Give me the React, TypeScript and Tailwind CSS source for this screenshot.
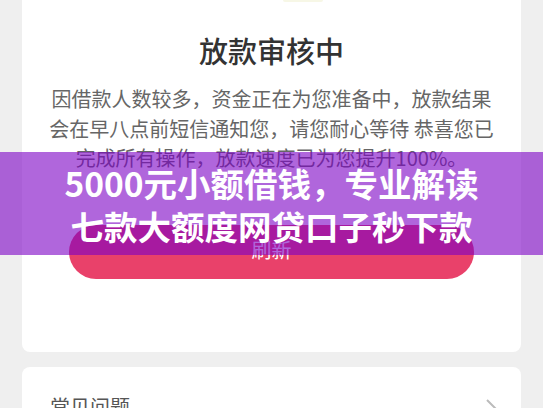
export default function App() {
  const font = { fontFamily: '"Noto Sans CJK SC", "Noto Sans", sans-serif' };
  return (
    <div
      style={font}
      className="relative w-[543px] h-[408px] overflow-hidden bg-[#efefef] px-[22px]"
    >
      {/* status card */}
      <div className="bg-white rounded-b-lg h-[352px] flex flex-col items-center">
        <div className="h-[3px] w-full flex justify-center">
          <span className="ml-[62px] w-[40px] h-[2px] rounded-b-full bg-[#f7f7e6]" />
        </div>
        <div className="mt-[27px] text-[29px] leading-[40px] font-medium text-[#333]">
          放款审核中
        </div>
        <div className="mt-[14px] text-[20px] leading-[29.5px] text-[#666] text-center whitespace-nowrap">
          <div>因借款人数较多，资金正在为您准备中，放款结果</div>
          <div>会在早八点前短信通知您，请您耐心等待 恭喜您已</div>
          <div>完成所有操作，放款速度已为您提升100%。</div>
        </div>
        <button className="mt-[52px] w-[405px] h-[54px] rounded-full bg-[#e9416a] text-white text-[20px] leading-[50px] pb-[4px]">
          刷新
        </button>
      </div>

      {/* faq card */}
      <div className="mt-[15px] bg-white rounded-t-lg h-[60px] flex items-start justify-between pl-[28px] pr-[24px] pt-[26px]">
        <span className="text-[20px] leading-[28px] text-[#555]">常见问题</span>
        <svg width="12" height="20" viewBox="0 0 12 20" className="mt-[5px]">
          <path d="M2 2 L10 10 L2 18" fill="none" stroke="#bbb" strokeWidth="2" />
        </svg>
      </div>

      {/* banner overlay */}
      <div className="absolute left-0 right-0 top-[152px] h-[103px] bg-[#7b00c5]/60 flex flex-col items-center justify-center text-white font-bold text-[33.5px] leading-[43px] whitespace-nowrap">
        <div>5000元小额借钱，专业解读</div>
        <div>七款大额度网贷口子秒下款</div>
      </div>
    </div>
  );
}
